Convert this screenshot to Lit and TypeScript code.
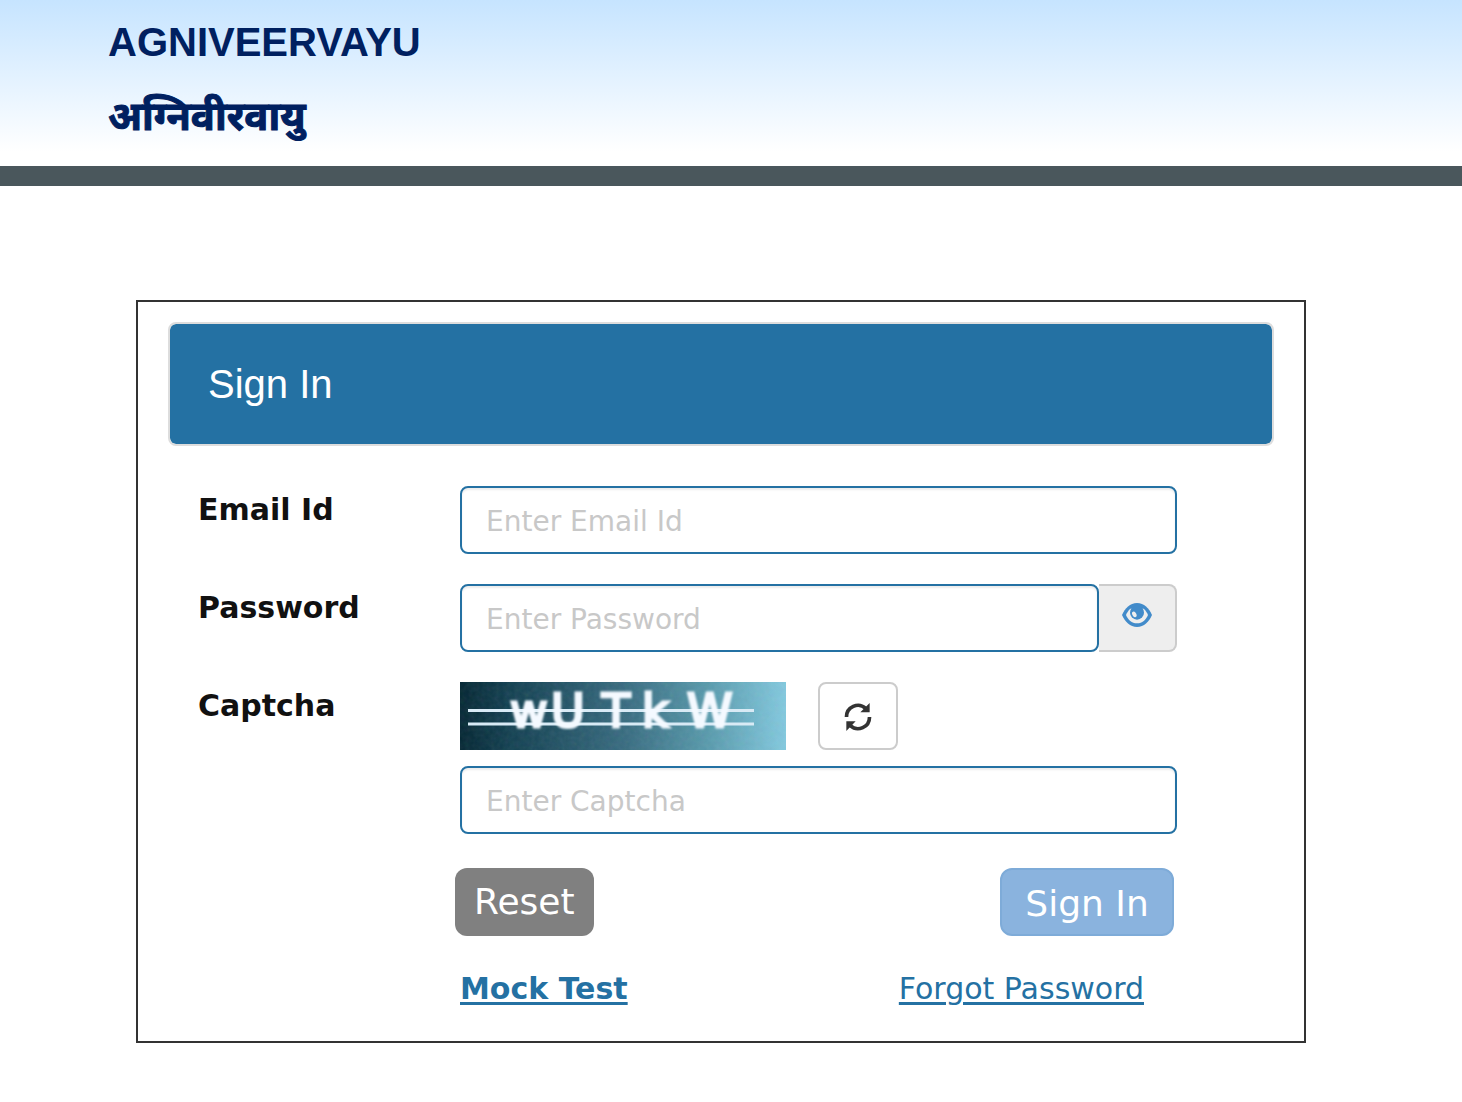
import { LitElement, html, css } from "lit";
import { customElement, state } from "lit/decorators.js";

@customElement("app-root")
export class AppRoot extends LitElement {
  static styles = css`
    :host {
      display: block;
      font-family: "DejaVu Sans", sans-serif;
      color: #111;
    }
    *, *::before, *::after { box-sizing: border-box; }
    .banner {
      padding: 16px 108px 24px;
      background: linear-gradient(#c6e4ff, #fff 152px);
      border-bottom: 20px solid #4a575c;
      color: #002060;
      font-family: "Liberation Sans", "Noto Sans Devanagari", "Noto Sans", sans-serif;
    }
    .title {
      margin: 0;
      font-size: 40px;
      line-height: 52px;
      font-weight: 700;
    }
    .title-hi { margin-top: 22px; -webkit-text-stroke: 1px currentColor; }
    .card {
      margin: 114px 156px 0 136px;
      padding: 20px 30px 32px;
      border: 2px solid #333;
    }
    .heading {
      margin: 0;
      padding: 36px 38px;
      border: 2px solid #ddd;
      border-radius: 8px;
      background: #2471a3;
      background-clip: padding-box;
      color: #fff;
      font: 400 40px/48px "Liberation Sans", sans-serif;
    }
    .form {
      display: grid;
      grid-template-columns: 262px 1fr;
      row-gap: 30px;
      margin-top: 40px;
      padding: 0 97px 0 30px;
    }
    .label {
      font-size: 30px;
      line-height: 48px;
      font-weight: 700;
    }
    .input {
      display: block;
      flex: 1;
      width: 100%;
      min-width: 0;
      height: 68px;
      padding: 2px 24px 0;
      border: 2px solid #2471a3;
      border-radius: 8px;
      background: #fff;
      box-shadow: inset 0 2px 2px rgba(0, 0, 0, 0.075);
      color: #333;
      font: 28px/40px "DejaVu Sans", sans-serif;
    }
    .input::placeholder { color: #c8c8c8; opacity: 1; }
    .group { display: flex; }
    .peek {
      width: 78px;
      height: 68px;
      padding: 0 0 6px;
      border: 2px solid #ccc;
      border-left: 0;
      border-radius: 0 8px 8px 0;
      background: #eee;
      display: flex;
      align-items: center;
      justify-content: center;
    }
    .captcha { display: flex; gap: 32px; margin-bottom: 16px; }
    .captcha-image { display: block; width: 326px; height: 68px; }
    .refresh {
      width: 80px;
      height: 68px;
      padding: 2px 0 0;
      border: 2px solid #ccc;
      border-radius: 8px;
      background: #fff;
      display: flex;
      align-items: center;
      justify-content: center;
    }
    .actions {
      display: flex;
      justify-content: space-between;
      margin: 34px 100px 0 287px;
    }
    .button {
      height: 68px;
      border-radius: 12px;
      color: #fff;
      font: 36px/44px "DejaVu Sans", sans-serif;
    }
    .reset { padding: 0 19px; border: 0; background: #808080; }
    .submit { min-width: 174px; padding: 4px 20px 0; border: 2px solid #7eabd8; background: #8ab3de; }
    .links {
      display: flex;
      justify-content: space-between;
      margin: 33px 130px 0 292px;
      font-size: 30px;
      line-height: 40px;
    }
    .link { color: #2471a3; text-decoration: underline; text-decoration-thickness: 3px; text-underline-offset: 3px; }
    .strong { font-weight: 700; }
  `;

  @state() private showPassword = false;

  render() {
    return html`
      <header class="banner">
        <h1 class="title">AGNIVEERVAYU</h1>
        <p class="title title-hi" lang="hi">अग्निवीरवायु</p>
      </header>
      <main class="card">
        <h2 class="heading">Sign In</h2>
        <form @submit=${(e: Event) => e.preventDefault()}>
          <div class="form">
            <label class="label" for="email">Email Id</label>
            <input class="input" id="email" type="email" placeholder="Enter Email Id" />
            <label class="label" for="password">Password</label>
            <div class="group">
              <input class="input" id="password" type=${this.showPassword ? "text" : "password"} placeholder="Enter Password" />
              <button class="peek" type="button" aria-label="Show password"
                @click=${() => (this.showPassword = !this.showPassword)}>
                <svg width="30" height="24" viewBox="126 99 90 72" fill="#428bca">
                  <path d="M126 135C135 115 150 99 171 99S207 115 216 135C207 155 192 171 171 171S135 155 126 135Z"/>
                  <path fill="#eee" d="M138 135C141 128 145 121 151 116H191C197 121 201 128 204 135C198 149 187 160 171 160S144 149 138 135Z"/>
                  <circle cx="171" cy="128" r="21"/>
                  <ellipse cx="163" cy="133" rx="6" ry="9" fill="#eee" transform="rotate(-28 163 133)"/>
                </svg>
              </button>
            </div>
            <label class="label" for="captcha">Captcha</label>
            <div>
              <div class="captcha">
                <svg class="captcha-image" viewBox="0 0 326 68" role="img" aria-label="Captcha">
                  <defs>
                    <linearGradient id="sea">
                      <stop offset="0" stop-color="#032633"/>
                      <stop offset="0.15" stop-color="#113f50"/>
                      <stop offset="0.5" stop-color="#366a7f"/>
                      <stop offset="0.75" stop-color="#5698aa"/>
                      <stop offset="1" stop-color="#82c9df"/>
                    </linearGradient>
                    <filter id="grain" x="0" y="0" width="1" height="1">
                      <feTurbulence type="fractalNoise" baseFrequency="0.2" numOctaves="2" seed="4"/>
                    </filter>
                    <filter id="soft"><feGaussianBlur stdDeviation="0.8"/></filter>
                  </defs>
                  <rect width="326" height="68" fill="url(#sea)"/>
                  <rect width="326" height="68" filter="url(#grain)" opacity="0.1"/>
                  <path d="M8 28.5H294M8 42H294" stroke="#d8eaf5" stroke-width="3"/>
                  <text y="45" x="50 91 142 182 227" fill="#f4f9ff" stroke="#f4f9ff" stroke-width="3" filter="url(#soft)" font-family="DejaVu Sans, sans-serif" font-size="46">wUTkW</text>
                </svg>
                <button class="refresh" type="button" aria-label="Refresh captcha">
                  <svg width="30" height="30" viewBox="70 51 90 90" fill="#333">
                    <path d="M80.5 96A34.5 34.5 0 0 1 138 70M149.5 96A34.5 34.5 0 0 1 92 122" fill="none" stroke="#333" stroke-width="11"/>
                    <path d="M150 54V82H122ZM80 138V109H108Z"/>
                  </svg>
                </button>
              </div>
              <input class="input" id="captcha" type="text" placeholder="Enter Captcha" />
            </div>
          </div>
          <div class="actions">
            <button class="button reset" type="reset">Reset</button>
            <button class="button submit" type="submit">Sign In</button>
          </div>
        </form>
        <nav class="links">
          <a class="link strong" href="#mock-test">Mock Test</a>
          <a class="link" href="#forgot-password">Forgot Password</a>
        </nav>
      </main>
    `;
  }
}
